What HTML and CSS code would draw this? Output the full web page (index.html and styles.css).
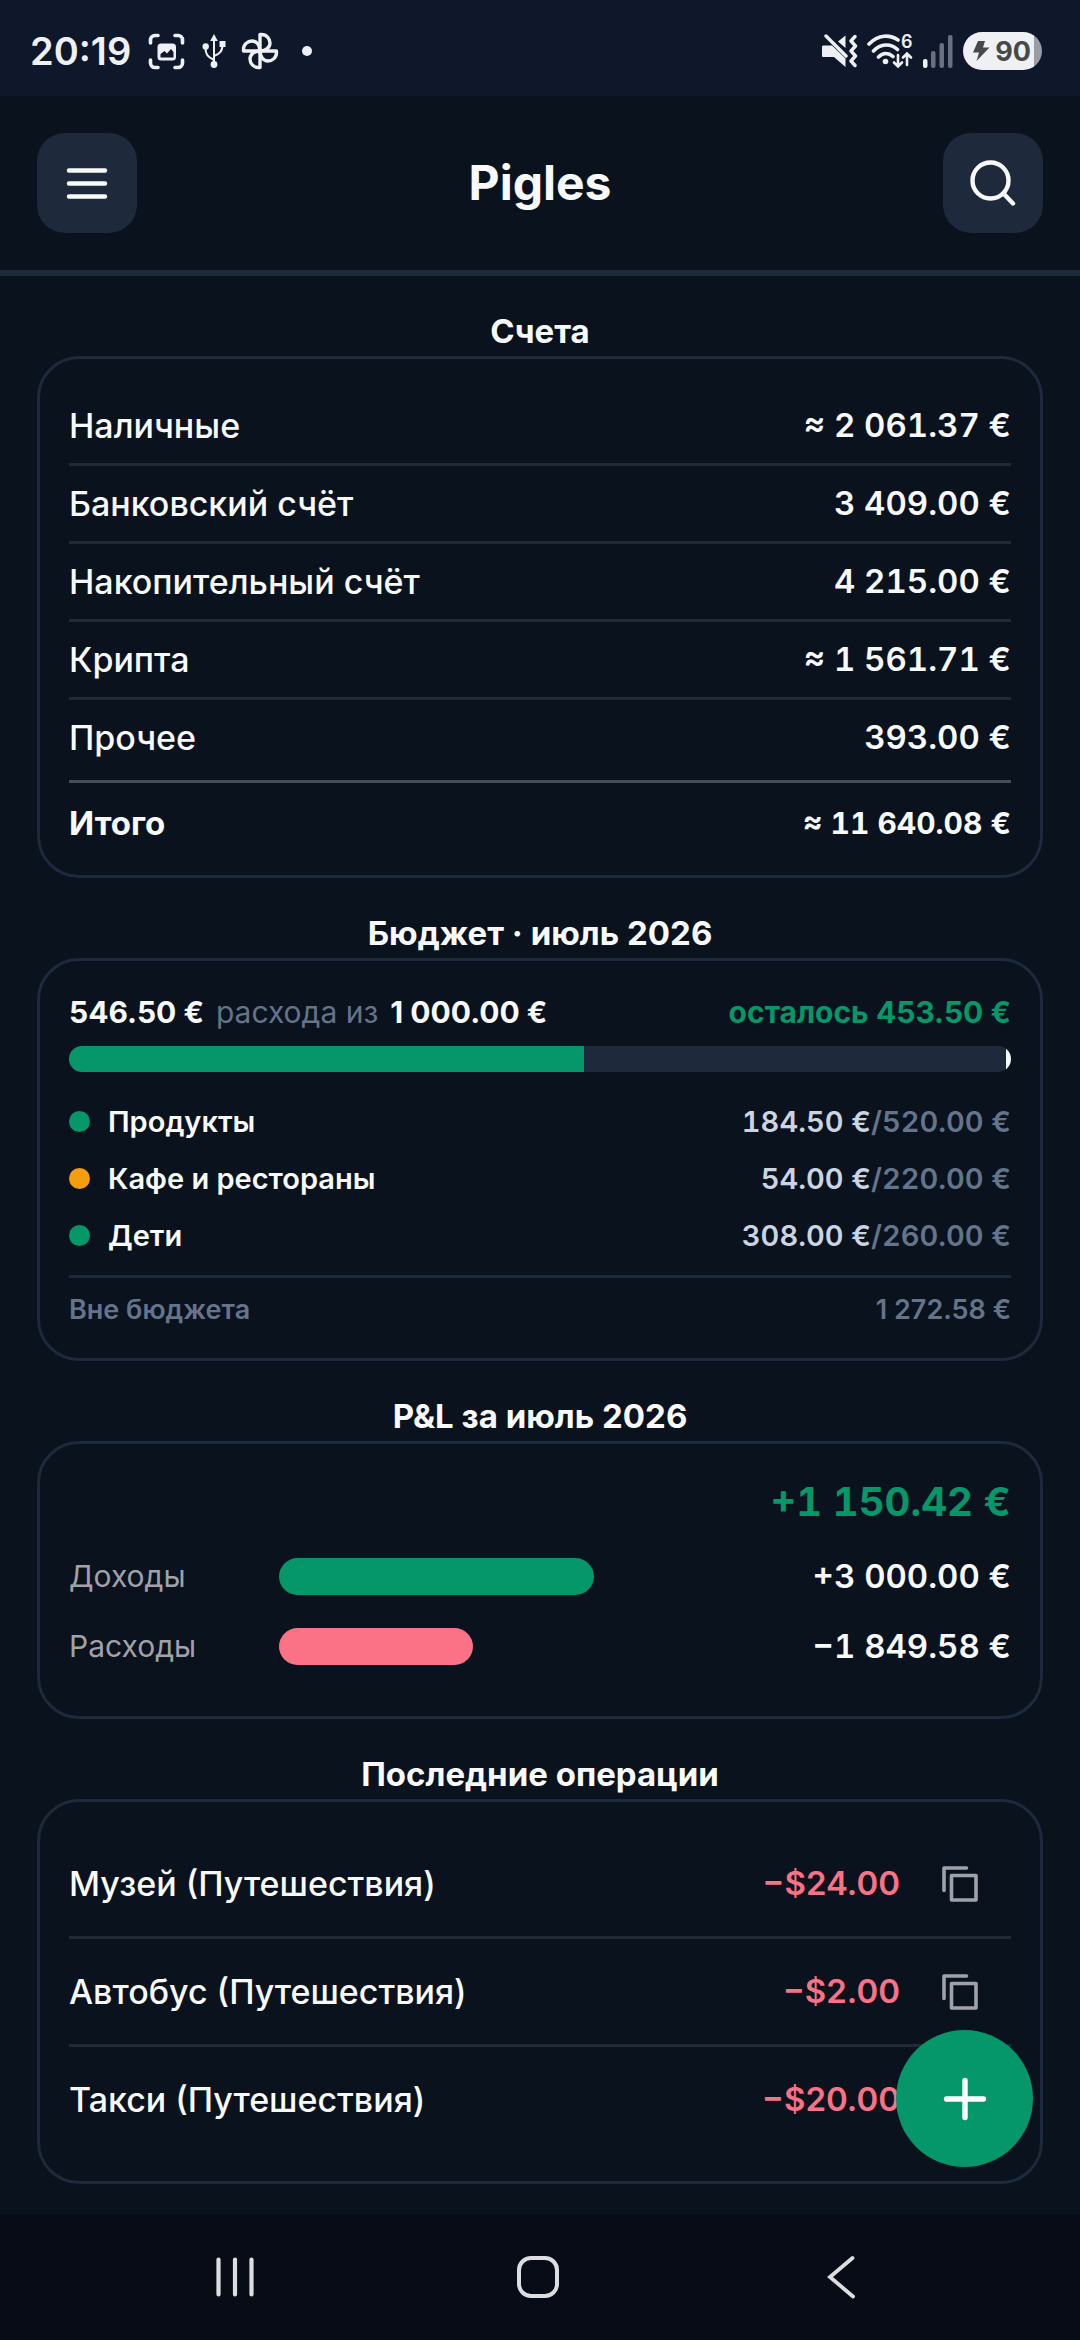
FILE: index.html
```html
<!DOCTYPE html>
<html lang="ru">
<head>
    <meta charset="UTF-8">
    <meta name="viewport" content="width=device-width, initial-scale=1.0">
    <title>Pigles</title>
    <link rel="stylesheet" href="styles.css">
</head>
<body>
    <div class="status-bar">
        <div class="status-group status-left">
            <span class="clock">20:19</span>
            <svg width="37" height="37" viewBox="0 0 37 37" fill="none" stroke="#eef0f3" stroke-width="3.6" stroke-linecap="round">
                <path d="M2.5 10V7a4.5 4.5 0 0 1 4.5-4.500h3M27 2.500h3A4.500 4.500 0 0 1 34.500 7v3M34.500 27v3a4.500 4.500 0 0 1-4.500 4.500h-3M10 34.500H7A4.500 4.500 0 0 1 2.500 30v-3"/>
                <rect x="9.5" y="10.5" width="18.5" height="17" rx="3.5" fill="#eef0f3" stroke="none"/>
                <path d="M12.5 24.500v-3.500l4-3 2.500 2.500 4-4.500 2.500 3v5.500z" fill="#0f172a" stroke="none"/>
            </svg>
            <svg class="icon-usb" width="24" height="36" viewBox="0 0 24 36" fill="none" stroke="#eef0f3" stroke-width="2">
                <path d="M12 6v25M12 27C6 24 3.5 22 3.5 14M12 23c6-2.5 8.5-4.5 8.5-12"/>
                <path d="M12 1l3.8 7H8.2z" fill="#eef0f3" stroke="none"/>
                <circle cx="3.7" cy="13.5" r="3.2" fill="#eef0f3" stroke="none"/>
                <rect x="17.5" y="8" width="6" height="6" fill="#eef0f3" stroke="none"/>
                <circle cx="12" cy="31.5" r="3.4" fill="#eef0f3" stroke="none"/>
            </svg>
            <svg width="38" height="38" viewBox="0 0 38 38" fill="none" stroke="#eef0f3" stroke-width="3.4" stroke-linejoin="round">
                <path d="M19 19V2.500h1.500c5 0 8.500 4 8.500 8.500 0 4.500-4 8-10 8z"/>
                <path d="M19 19h16.500v1.500c0 5-4 8.500-8.500 8.500-4.500 0-8-4-8-10z"/>
                <path d="M19 19v16.500h-1.500c-5 0-8.500-4-8.500-8.500 0-4.500 4-8 10-8z"/>
                <path d="M19 19H2.500v-1.500C2.500 12.500 6.500 9 11 9c4.500 0 8 4 8 10z"/>
            </svg>
            <span class="more-dot"></span>
        </div>
        <div class="status-group status-right">
            <svg width="36" height="34" viewBox="0 0 36 34">
                <path d="M1.500 11.500H10l13.500 13v8.500L12 23H1.500c-1 0-1.500-.5-1.500-1.500v-8.500c0-1 .5-1.500 1.500-1.500zM23.500 1.500v12.500l-7.500-6.500z" fill="#eef0f3"/>
                <path d="M4 2l20 20M33 2.500l-4 4.500 4.500 5-4.500 5 4.500 5-4.500 5 4 4.500" fill="none" stroke="#eef0f3" stroke-width="3.4" stroke-linecap="round" stroke-linejoin="round"/>
            </svg>
            <svg width="46" height="46" viewBox="0 -6 46 46" fill="none" stroke="#eef0f3" stroke-width="3.6" stroke-linecap="round">
                <path d="M2 10C11.500 0 23 .5 31 6M6.500 17c7-7.500 17-8 24-1.500M11.500 23c4.500-4.500 10-4.500 14.500-.5"/>
                <circle cx="18.5" cy="27.5" r="2.8" fill="#eef0f3" stroke="none"/>
                <path d="M31 21v11M27 28.500l4 4 4-4M40 31V19.500M36 23.500l4-4 4 4" stroke-width="2.6"/>
                <text x="34" y="14" class="wifi-mark">6</text>
            </svg>
            <svg width="32" height="34" viewBox="0 0 32 34">
                <rect x="1" y="25" width="4.5" height="9" rx="2" fill="#eef0f3"/>
                <rect x="9" y="17" width="4.5" height="17" rx="2" fill="#6b7080"/>
                <rect x="17.5" y="9" width="4.5" height="25" rx="2" fill="#6b7080"/>
                <rect x="26" y="1" width="4.5" height="33" rx="2" fill="#6b7080"/>
            </svg>
            <span class="battery">
                <svg width="17" height="20" viewBox="0 0 17 20" fill="#47484c">
                    <path d="M5 0h7l-2 6.500h6.500L3.500 20l2.500-8.500H0z"/>
                </svg>
                90
            </span>
        </div>
    </div>

    <header class="header">
        <button type="button" class="icon-btn" aria-label="Меню">
            <svg width="42" height="42" viewBox="0 0 42 42" stroke="#f8fafc" stroke-width="4.5" stroke-linecap="round">
                <path d="M3 8.500h36M3 21.500h36M3 34.500h36"/>
            </svg>
        </button>
        <h1 class="title">Pigles</h1>
        <button type="button" class="icon-btn" aria-label="Поиск">
            <svg width="46" height="46" viewBox="0 0 46 46" fill="none" stroke="#f8fafc" stroke-width="4.4" stroke-linecap="round">
                <circle cx="20.5" cy="20.5" r="18"/>
                <path d="M33.500 33.500l9.500 10"/>
            </svg>
        </button>
    </header>

    <main class="content">
        <section>
            <h2>Счета</h2>
            <div class="card">
                <table class="accounts">
                    <tbody>
                        <tr><td>Наличные</td><td class="amount">≈ 2&nbsp;061.37&nbsp;€</td></tr>
                        <tr><td>Банковский счёт</td><td class="amount">3&nbsp;409.00&nbsp;€</td></tr>
                        <tr><td>Накопительный счёт</td><td class="amount">4&nbsp;215.00&nbsp;€</td></tr>
                        <tr><td>Крипта</td><td class="amount">≈ 1&nbsp;561.71&nbsp;€</td></tr>
                        <tr><td>Прочее</td><td class="amount">393.00&nbsp;€</td></tr>
                    </tbody>
                    <tfoot>
                        <tr><td>Итого</td><td class="amount">≈ 11&nbsp;640.08&nbsp;€</td></tr>
                    </tfoot>
                </table>
            </div>
        </section>

        <section>
            <h2>Бюджет · июль 2026</h2>
            <div class="card">
                <div class="budget-summary">
                    <div class="budget-spent">
                        <strong>546.50&nbsp;€</strong>
                        <span>расхода из</span>
                        <strong>1&nbsp;000.00&nbsp;€</strong>
                    </div>
                    <strong class="budget-left">осталось 453.50&nbsp;€</strong>
                </div>
                <div class="progress">
                    <div class="progress-fill" style="width: 54.65%"></div>
                    <div class="progress-limit"></div>
                </div>
                <ul class="budget-list">
                    <li>
                        <span class="dot dot-green"></span>
                        <span class="budget-name">Продукты</span>
                        <span class="budget-value">184.50&nbsp;€<span>/520.00&nbsp;€</span></span>
                    </li>
                    <li>
                        <span class="dot dot-amber"></span>
                        <span class="budget-name">Кафе и рестораны</span>
                        <span class="budget-value">54.00&nbsp;€<span>/220.00&nbsp;€</span></span>
                    </li>
                    <li>
                        <span class="dot dot-green"></span>
                        <span class="budget-name">Дети</span>
                        <span class="budget-value">308.00&nbsp;€<span>/260.00&nbsp;€</span></span>
                    </li>
                </ul>
                <div class="budget-other">
                    <span>Вне бюджета</span>
                    <span>1&nbsp;272.58&nbsp;€</span>
                </div>
            </div>
        </section>

        <section>
            <h2>P&amp;L за июль 2026</h2>
            <div class="card pnl">
                <div class="pnl-total">+1&nbsp;150.42&nbsp;€</div>
                <div class="pnl-row">
                    <span class="pnl-label">Доходы</span>
                    <div class="pnl-track"><div class="pnl-bar income" style="width: 100%"></div></div>
                    <span class="amount">+3&nbsp;000.00&nbsp;€</span>
                </div>
                <div class="pnl-row">
                    <span class="pnl-label">Расходы</span>
                    <div class="pnl-track"><div class="pnl-bar expense" style="width: 61.7%"></div></div>
                    <span class="amount">−1&nbsp;849.58&nbsp;€</span>
                </div>
            </div>
        </section>

        <section>
            <h2>Последние операции</h2>
            <div class="card">
                <ul class="operations">
                    <li>
                        <span class="op-name">Музей (Путешествия)</span>
                        <span class="op-amount">−$24.00</span>
                        <button type="button" class="copy-btn" aria-label="Копировать">
                            <svg width="36" height="36" viewBox="0 0 36 36" fill="none" stroke="#9fa2a9" stroke-width="3.6" stroke-linejoin="round" stroke-linecap="round">
                                <rect x="9.5" y="9.5" width="24.5" height="24.5"/>
                                <path d="M2 24.500V2h22.500"/>
                            </svg>
                        </button>
                    </li>
                    <li>
                        <span class="op-name">Автобус (Путешествия)</span>
                        <span class="op-amount">−$2.00</span>
                        <button type="button" class="copy-btn" aria-label="Копировать">
                            <svg width="36" height="36" viewBox="0 0 36 36" fill="none" stroke="#9fa2a9" stroke-width="3.6" stroke-linejoin="round" stroke-linecap="round">
                                <rect x="9.5" y="9.5" width="24.5" height="24.5"/>
                                <path d="M2 24.500V2h22.500"/>
                            </svg>
                        </button>
                    </li>
                    <li>
                        <span class="op-name">Такси (Путешествия)</span>
                        <span class="op-amount">−$20.00</span>
                        <button type="button" class="copy-btn" aria-label="Копировать">
                            <svg width="36" height="36" viewBox="0 0 36 36" fill="none" stroke="#9fa2a9" stroke-width="3.6" stroke-linejoin="round" stroke-linecap="round">
                                <rect x="9.5" y="9.5" width="24.5" height="24.5"/>
                                <path d="M2 24.500V2h22.500"/>
                            </svg>
                        </button>
                    </li>
                </ul>
            </div>
        </section>
    </main>

    <button type="button" class="fab" aria-label="Добавить">
        <svg width="44" height="44" viewBox="0 0 44 44" stroke="#fff" stroke-width="5.4" stroke-linecap="round">
            <path d="M22 3.500v37M3.500 22h37"/>
        </svg>
    </button>

    <nav class="nav-bar">
        <button type="button" aria-label="Недавние">
            <svg width="40" height="42" viewBox="0 0 40 42" stroke="#dcdee1" stroke-width="4.2" stroke-linecap="round">
                <path d="M3.500 3.500v35M20 3.500v35M36.500 3.500v35"/>
            </svg>
        </button>
        <button type="button" aria-label="Домой">
            <svg width="44" height="44" viewBox="0 0 44 44" fill="none" stroke="#dcdee1" stroke-width="4">
                <rect x="3" y="3" width="38" height="38" rx="12"/>
            </svg>
        </button>
        <button type="button" aria-label="Назад">
            <svg width="28" height="44" viewBox="0 0 28 44" fill="none" stroke="#dcdee1" stroke-width="3.8" stroke-linecap="round">
                <path d="M25.500 3L3 22l23 19.500"/>
            </svg>
        </button>
    </nav>
</body>
</html>
```
FILE: styles.css
```css
:root {
    --bg: #0a121e;
    --surface: #1e293b;
    --text: #f8fafc;
    --muted: #64748b;
    --green: #059669;
    --red: #fb7185;
    --line: rgba(255, 255, 255, 0.1);
}

* {
    box-sizing: border-box;
}

body {
    margin: 0;
    min-height: 100vh;
    display: flex;
    flex-direction: column;
    background: var(--bg);
    color: var(--text);
    font-family: Inter, "Noto Sans", sans-serif;
    font-size: 34px;
    line-height: 45px;
}

button {
    padding: 0;
    border: none;
    background: none;
    display: flex;
    align-items: center;
    justify-content: center;
    cursor: pointer;
}

ul {
    list-style: none;
    margin: 0;
    padding: 0;
}

/* Status bar */
.status-bar {
    height: 96px;
    padding: 6px 38px 0 30px;
    display: flex;
    align-items: center;
    justify-content: space-between;
    background: #0f172a;
}

.status-group {
    display: flex;
    align-items: center;
}

.status-left {
    gap: 17px;
}

.status-right {
    gap: 9px;
}

.clock {
    font-size: 38px;
    font-weight: 600;
    color: #eef0f3;
}

.icon-usb {
    margin-right: -2px;
}

.more-dot {
    width: 10px;
    height: 10px;
    margin-left: 6px;
    border-radius: 50%;
    background: #eef0f3;
}

.wifi-mark {
    font-size: 18px;
    font-weight: 600;
    fill: #eef0f3;
    stroke: none;
}

.battery {
    height: 38px;
    padding: 0 11px 0 10px;
    display: flex;
    align-items: center;
    gap: 5px;
    border-radius: 19px;
    background: linear-gradient(90deg, #eef0f3 90%, #9a9ca6 90%);
    color: #47484c;
    font-size: 27px;
    font-weight: 700;
}

/* Header */
.header {
    display: flex;
    align-items: center;
    justify-content: space-between;
    padding: 37px;
    border-bottom: 6px solid var(--surface);
}

.icon-btn {
    width: 100px;
    height: 100px;
    border-radius: 28px;
    background: var(--surface);
}

.title {
    margin: 0;
    font-size: 48px;
    font-weight: 700;
    line-height: 60px;
}

/* Cards */
.content {
    flex: 1;
    display: flex;
    flex-direction: column;
    gap: 30px;
    padding: 30px 37px;
}

h2 {
    margin: 0;
    text-align: center;
    font-size: 33px;
    font-weight: 700;
    line-height: 50px;
}

.card {
    padding: 29px;
    border: 3px solid var(--surface);
    border-radius: 42px;
}

.amount {
    font-size: 33px;
    font-weight: 600;
    text-align: right;
    white-space: nowrap;
    font-variant-numeric: tabular-nums;
}

/* Accounts */
.accounts {
    width: 100%;
    border-spacing: 0;
}

.accounts td {
    padding: 15px 0;
    border-bottom: 3px solid var(--line);
}

.accounts td:first-child {
    font-weight: 500;
}

.accounts tbody tr:last-child td {
    padding-bottom: 20px;
    border-bottom: none;
}

.accounts tfoot td {
    padding: 18px 0 0;
    border-top: 3px solid rgba(255, 255, 255, 0.25);
    border-bottom: none;
}

.accounts tfoot td:first-child {
    font-size: 33px;
    font-weight: 700;
}

.accounts tfoot .amount {
    font-size: 30px;
    font-weight: 700;
}

/* Budget */
.budget-summary {
    display: flex;
    justify-content: space-between;
    font-size: 30px;
}

.budget-spent {
    display: flex;
    gap: 12px;
}

.budget-spent span {
    color: var(--muted);
}

.budget-left {
    color: var(--green);
}

.progress {
    display: flex;
    justify-content: space-between;
    height: 26px;
    margin: 11px 0 21px;
    border-radius: 13px;
    overflow: hidden;
    background: var(--surface);
}

.progress-fill {
    background: var(--green);
}

.progress-limit {
    width: 5px;
    background: var(--text);
}

.budget-list li {
    display: flex;
    align-items: center;
    gap: 18px;
    height: 57px;
    font-size: 29px;
    font-weight: 600;
}

.dot {
    width: 21px;
    height: 21px;
    border-radius: 50%;
}

.dot-green {
    background: var(--green);
}

.dot-amber {
    background: #f59e0b;
}

.budget-name {
    flex: 1;
}

.budget-value {
    color: #cbd5e1;
    font-variant-numeric: tabular-nums;
}

.budget-value span {
    color: var(--muted);
}

.budget-other {
    display: flex;
    justify-content: space-between;
    margin-top: 11px;
    padding-top: 12px;
    border-top: 3px solid var(--surface);
    color: var(--muted);
    font-size: 27px;
    font-weight: 600;
    line-height: 39px;
}

/* P&L */
.pnl {
    display: flex;
    flex-direction: column;
    gap: 21px;
    padding-bottom: 45px;
}

.pnl-total {
    color: var(--green);
    font-size: 40px;
    font-weight: 700;
    line-height: 58px;
    text-align: right;
    font-variant-numeric: tabular-nums;
}

.pnl-row {
    display: grid;
    grid-template-columns: 21fr 35fr 44fr;
    gap: 21px;
    align-items: center;
    line-height: 49px;
}

.pnl-label {
    color: #a1a1aa;
    font-size: 30px;
}

.pnl-bar {
    height: 37px;
    border-radius: 19px;
}

.income {
    background: var(--green);
}

.expense {
    background: var(--red);
}

/* Operations */
.operations li {
    display: flex;
    align-items: center;
    border-bottom: 3px solid var(--line);
}

.operations li:last-child {
    border-bottom: none;
}

.op-name {
    flex: 1;
    font-weight: 500;
}

.op-amount {
    color: var(--red);
    font-size: 33px;
    font-weight: 600;
}

.copy-btn {
    width: 102px;
    height: 105px;
    margin-left: 9px;
}

/* Floating button, sits above the nav bar */
.fab {
    position: fixed;
    right: 47px;
    bottom: 173px;
    width: 137px;
    height: 137px;
    border-radius: 50%;
    background: var(--green);
}

.nav-bar {
    display: flex;
    height: 126px;
    padding: 0 87px 0 83px;
    background: #080c16;
}

.nav-bar button {
    flex: 1;
}
```
